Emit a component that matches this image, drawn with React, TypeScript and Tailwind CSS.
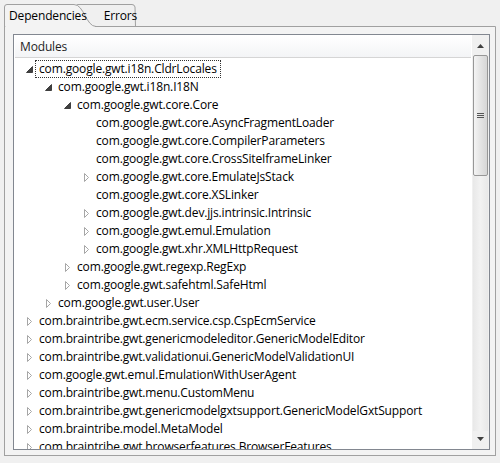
import React from 'react'

type Node = { label: string; level: number; state: 'open' | 'closed' | 'leaf' }

const rows: Node[] = [
  { label: 'com.google.gwt.i18n.CldrLocales', level: 0, state: 'open' },
  { label: 'com.google.gwt.i18n.I18N', level: 1, state: 'open' },
  { label: 'com.google.gwt.core.Core', level: 2, state: 'open' },
  { label: 'com.google.gwt.core.AsyncFragmentLoader', level: 3, state: 'leaf' },
  { label: 'com.google.gwt.core.CompilerParameters', level: 3, state: 'leaf' },
  { label: 'com.google.gwt.core.CrossSiteIframeLinker', level: 3, state: 'leaf' },
  { label: 'com.google.gwt.core.EmulateJsStack', level: 3, state: 'closed' },
  { label: 'com.google.gwt.core.XSLinker', level: 3, state: 'leaf' },
  { label: 'com.google.gwt.dev.jjs.intrinsic.Intrinsic', level: 3, state: 'closed' },
  { label: 'com.google.gwt.emul.Emulation', level: 3, state: 'closed' },
  { label: 'com.google.gwt.xhr.XMLHttpRequest', level: 3, state: 'closed' },
  { label: 'com.google.gwt.regexp.RegExp', level: 2, state: 'closed' },
  { label: 'com.google.gwt.safehtml.SafeHtml', level: 2, state: 'closed' },
  { label: 'com.google.gwt.user.User', level: 1, state: 'closed' },
  { label: 'com.braintribe.gwt.ecm.service.csp.CspEcmService', level: 0, state: 'closed' },
  { label: 'com.braintribe.gwt.genericmodeleditor.GenericModelEditor', level: 0, state: 'closed' },
  { label: 'com.braintribe.gwt.validationui.GenericModelValidationUI', level: 0, state: 'closed' },
  { label: 'com.google.gwt.emul.EmulationWithUserAgent', level: 0, state: 'closed' },
  { label: 'com.braintribe.gwt.menu.CustomMenu', level: 0, state: 'closed' },
  { label: 'com.braintribe.gwt.genericmodelgxtsupport.GenericModelGxtSupport', level: 0, state: 'closed' },
  { label: 'com.braintribe.model.MetaModel', level: 0, state: 'closed' },
  { label: 'com.braintribe.gwt.browserfeatures.BrowserFeatures', level: 0, state: 'closed' },
]

const indent = ['pl-[8px]', 'pl-[27px]', 'pl-[46px]', 'pl-[65px]']

function Toggle({ state }: { state: Node['state'] }) {
  if (state === 'leaf') return <span className="w-[16px] shrink-0" />
  return (
    <svg width="16" height="18" viewBox="0 0 16 18" className="shrink-0">
      {state === 'open' ? (
        <path d="M10.5 6.5 L10.5 12.5 L4.5 12.5 Z" fill="#404040" stroke="#262626" strokeWidth="0.8" />
      ) : (
        <path d="M5.5 5.5 L5.5 13.5 L9.5 9.5 Z" fill="#fff" stroke="#a6a6a6" strokeWidth="1" />
      )}
    </svg>
  )
}

function Row({ node, focused }: { node: Node; focused?: boolean }) {
  return (
    <div className={`flex h-[18px] items-center ${indent[node.level]}`}>
      <Toggle state={node.state} />
      <span
        className={`ml-[-3px] whitespace-nowrap px-[3px] leading-[16px] ${
          focused ? 'border border-dotted border-[#333]' : 'border border-transparent'
        }`}
      >
        {node.label}
      </span>
    </div>
  )
}

function Scrollbar() {
  return (
    <div className="flex w-[17px] shrink-0 flex-col bg-[#f0f0f0] px-[1px] pt-[3px] pb-[2px]">
      <div className="flex h-[16px] items-center justify-center">
        <svg width="7" height="4" viewBox="0 0 7 4">
          <path d="M0 4 L3.5 0 L7 4 Z" fill="#404040" />
        </svg>
      </div>
      <div className="mt-[1px] flex h-[121px] items-center justify-center rounded-[2px] border border-[#979797] bg-gradient-to-r from-[#f4f4f4] via-[#e4e4e4] to-[#d6d6d6]">
        <svg width="7" height="7" viewBox="0 0 7 7">
          <path d="M0 1.5 H7 M0 3.5 H7 M0 5.5 H7" stroke="#555" strokeWidth="1" />
        </svg>
      </div>
      <div className="flex-1 bg-gradient-to-r from-[#e8e8e8] via-[#f2f2f2] to-[#e8e8e8]" />
      <div className="flex h-[16px] items-center justify-center">
        <svg width="7" height="4" viewBox="0 0 7 4">
          <path d="M0 0 L3.5 4 L7 0 Z" fill="#404040" />
        </svg>
      </div>
    </div>
  )
}

function Tabs() {
  return (
    <div className="relative flex h-[23px] items-center text-[12px] text-black">
      <svg className="absolute inset-0" width="492" height="23" viewBox="0 0 492 23">
        <path d="M72 23 L72 2.5 Q72 0.5 74 0.5 L128 0.5 Q130.5 0.5 131 3 L131.5 23" fill="#f0f0f0" stroke="#a0a0a0" />
        <path
          d="M0.5 23 L0.5 3 Q0.5 0.5 3 0.5 L70 0.5 C80 0.5 82 22.5 92 22.5 L491.5 22.5 L491.5 23"
          fill="#f3f3f3"
          stroke="#a0a0a0"
        />
        <path d="M1 22.5 L1 23 M91 22.5 L491 22.5" stroke="#a0a0a0" />
      </svg>
      <span className="relative ml-[5px] pt-[1px]">Dependencies</span>
      <span className="relative ml-[17px] pt-[1px]">Errors</span>
    </div>
  )
}

export default function App() {
  return (
    <div className="h-[463px] w-[500px] overflow-hidden bg-[#f0f0f0] px-[4px] pt-[4px] font-['Open_Sans',sans-serif] text-[12px] tracking-[-0.15px] text-black">
      <Tabs />
      <div className="h-[429px] border border-t-0 border-[#a0a0a0] bg-[#f3f3f3] pt-[7px] pr-[5px] pb-[5px] pl-[8px]">
        <div className="flex h-full border border-[#828790] bg-white">
          <div className="flex min-w-0 flex-1 flex-col overflow-hidden">
            <div className="mx-[1px] mt-[1px] flex h-[22px] shrink-0 items-center border-b border-[#d5d5d5] bg-gradient-to-b from-[#ffffff] to-[#f3f4f6] pl-[5px] text-[#1e1e1e]">
              Modules
            </div>
            <div className="pt-[2px]">
              {rows.map((r, i) => (
                <Row key={i} node={r} focused={i === 0} />
              ))}
            </div>
          </div>
          <Scrollbar />
        </div>
      </div>
    </div>
  )
}
